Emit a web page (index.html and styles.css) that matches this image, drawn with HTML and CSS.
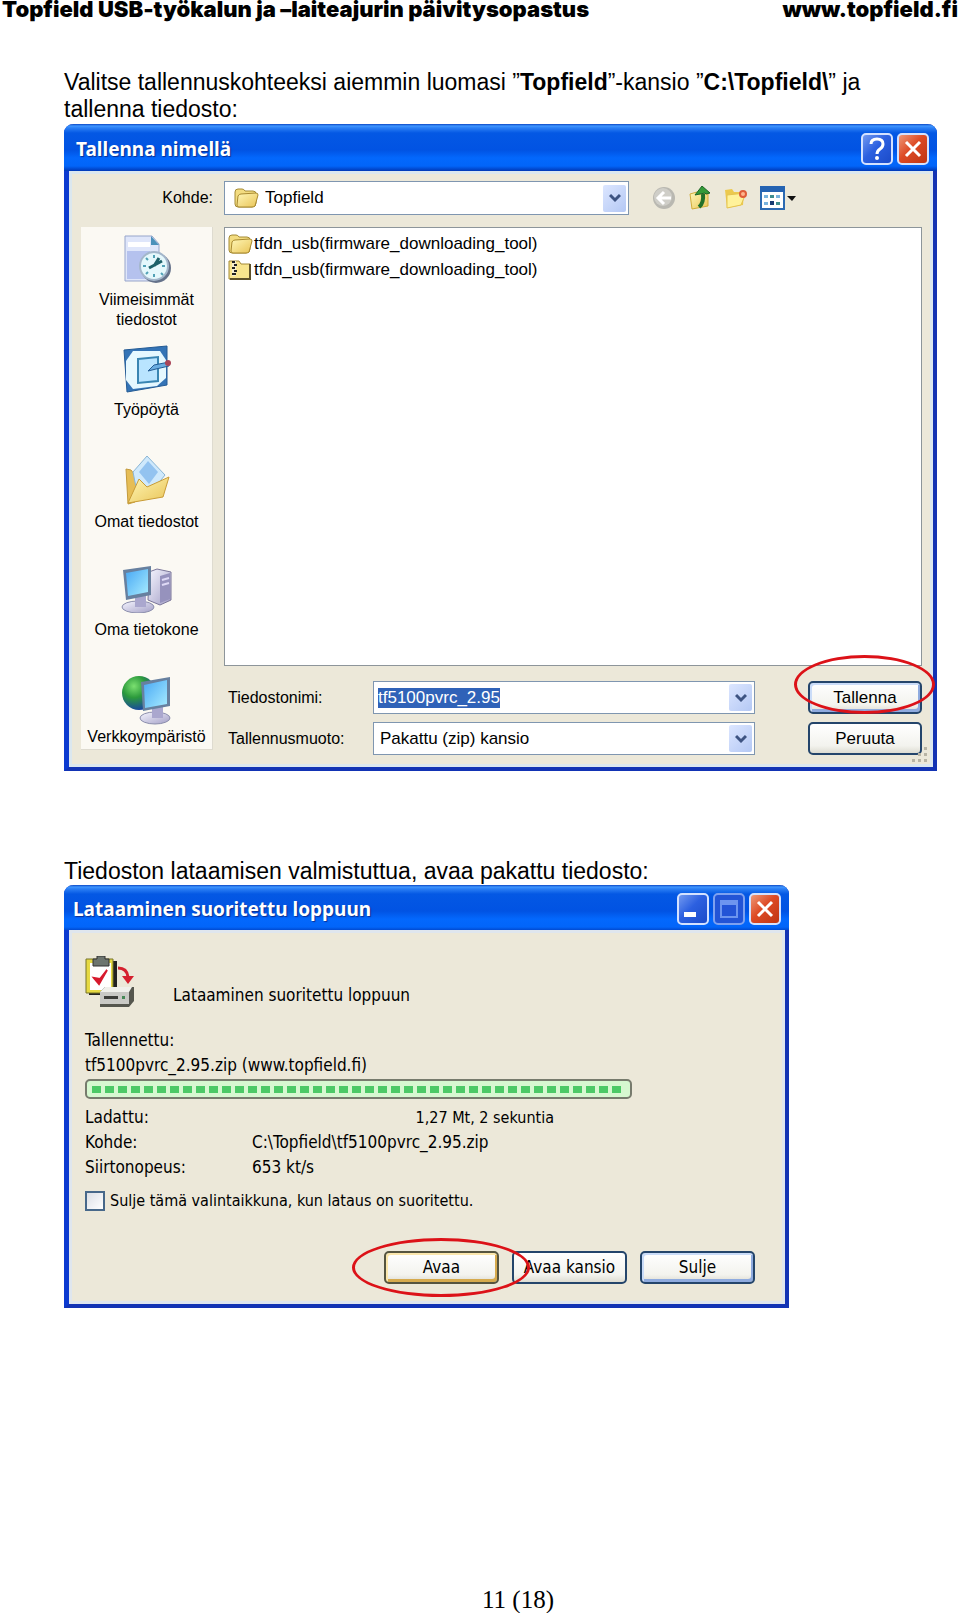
FILE: index.html
```html
<!DOCTYPE html>
<html lang="fi">
<head>
<meta charset="utf-8">
<meta name="viewport" content="width=device-width, initial-scale=1">
<title>Topfield USB-työkalun ja –laiteajurin päivitysopastus</title>
<link rel="stylesheet" href="styles.css">
</head>
<body>
<svg class="defs" aria-hidden="true">
  <defs>
    <linearGradient id="gold" x1="0" y1="0" x2="1" y2="1"><stop offset="0" stop-color="#fff7b8"/><stop offset="1" stop-color="#e9c456"/></linearGradient>
    <linearGradient id="screen" x1="0" y1="0" x2="1" y2="1"><stop offset="0" stop-color="#48a8f4"/><stop offset="1" stop-color="#a8ecff"/></linearGradient>
    <linearGradient id="metal" x1="0" y1="0" x2="1" y2="1"><stop offset="0" stop-color="#f6f6ff"/><stop offset="1" stop-color="#a39fc6"/></linearGradient>
    <radialGradient id="globe" cx=".35" cy=".3" r=".75"><stop offset="0" stop-color="#7be070"/><stop offset=".45" stop-color="#2c9a3c"/><stop offset="1" stop-color="#173fa8"/></radialGradient>
    <symbol id="folder" viewBox="0 0 26 22">
      <path d="M2 5q0-3 3-3h4q2 0 3 2h8q3 0 3 3v9q0 4-4 4H5q-3 0-3-3z" fill="#f3dc80" stroke="#a48a35"/>
      <path d="M5 9q1-2 3-2l15-1q2 0 2 2l-3 11q-1 1-3 1H6q-2 0-2-2z" fill="url(#gold)" stroke="#a98a30"/>
    </symbol>
    <symbol id="chevron" viewBox="0 0 12 10"><path d="M1 2l5 5 5-5" fill="none" stroke="#3e5482" stroke-width="3"/></symbol>
    <symbol id="cross" viewBox="0 0 20 20"><path d="M3 3l14 14M17 3L3 17" fill="none" stroke="#fff" stroke-width="3"/></symbol>
  </defs>
</svg>

<header class="page-header">
  <span>Topfield USB-työkalun ja –laiteajurin päivitysopastus</span>
  <span>www.topfield.fi</span>
</header>

<main class="content">
  <p class="instruction">Valitse tallennuskohteeksi aiemmin luomasi ”<b>Topfield</b>”-kansio ”<b>C:\Topfield\</b>” ja tallenna tiedosto:</p>

  <section class="window" aria-labelledby="save-title">
    <div class="titlebar">
      <h2 class="title" id="save-title">Tallenna nimellä</h2>
      <button class="caption-btn" type="button" aria-label="Ohje"><svg width="20" height="24" viewBox="0 0 20 24"><path d="M4 7q0-5 6-5t6 5q0 3-3 5t-3 5" fill="none" stroke="#fff" stroke-width="3"/><circle cx="10" cy="21" r="2" fill="#fff"/></svg></button>
      <button class="caption-btn close" type="button" aria-label="Sulje ikkuna"><svg width="20" height="20"><use href="#cross"/></svg></button>
    </div>
    <div class="save-body">
      <div class="toolbar">
        <label class="toolbar-label" for="folder">Kohde:</label>
        <div class="combo folder-combo">
          <svg width="26" height="22"><use href="#folder"/></svg>
          <select class="combo-field" id="folder"><option>Topfield</option></select>
          <span class="combo-arrow"><svg width="12" height="10"><use href="#chevron"/></svg></span>
        </div>
        <div class="tools">
          <button class="tool" type="button" aria-label="Takaisin"><svg width="24" height="24" viewBox="0 0 24 24"><circle cx="12" cy="12" r="11" fill="#b9b8b1"/><circle cx="11" cy="11" r="9" fill="#cfcec8"/><path d="M12 6l-6 6 6 6M7 12h12" fill="none" stroke="#fff" stroke-width="3"/></svg></button>
          <button class="tool" type="button" aria-label="Ylös"><svg width="24" height="24" viewBox="0 0 24 24"><path d="M2 8l7-2 2 2h9v12L4 23z" fill="url(#gold)" stroke="#d1ac39"/><path d="M11 21q5-4 4-13" fill="none" stroke="#21702a" stroke-width="4"/><path d="M7 9l7-9 8 7-4 1-1-1-5 1z" fill="#349b38" stroke="#1d6426"/></svg></button>
          <button class="tool" type="button" aria-label="Uusi kansio"><svg width="24" height="24" viewBox="0 0 24 24"><path d="M1 4l7-1 2 3h10l-1 13-16 3z" fill="#ecc94e"/><path d="M3 9l19-2-5 12-14 3z" fill="#fff29a" stroke="#e5c34e"/><circle cx="19" cy="8" r="3" fill="#ffb58c" stroke="#df5d38" stroke-width="2"/></svg></button>
          <button class="tool" type="button" aria-label="Näkymät"><svg width="36" height="24" viewBox="0 0 36 24"><path d="M1 1h23v22H1z" fill="#fff" stroke="#2c6ab2" stroke-width="2"/><path d="M0 0h25v6H0z" fill="#2563b2"/><path d="M4 9h4v3H4zM16 9h4v3h-4zM4 16h4v3H4z" fill="#79b3dd"/><path d="M10 9h4v3h-4zM16 16h4v3h-4z" fill="#3e8d8f"/><path d="M10 15h4v4h-4z" fill="#173b72"/><path d="M27 10h9l-4 5z" fill="#111"/></svg></button>
        </div>
      </div>
      <div class="browser">
        <nav class="places">
          <a class="place" href="#recent"><svg width="48" height="48" viewBox="0 0 48 48"><path d="M2 1h27l7 8v37H2z" fill="#dfe6fa" stroke="#97a5ca"/><path d="M4 16h23v28H4z" fill="#b5c2ee"/><path d="M5 7h22v5H5z" fill="#fff"/><path d="M28 1l8 9h-8z" fill="#4b91ba"/><circle cx="33" cy="33" r="15" fill="#65728a"/><circle cx="31" cy="31" r="14" fill="#e5f8fc" stroke="#a4b7cb" stroke-width="2"/><path d="M31 20v3M31 39v3M20 31h3M39 31h3M23 23l2 2M38 38l2 2M23 39l2-2" stroke="#51a1b6" stroke-width="2"/><path d="M26 33l13-7M31 31l5-8" stroke="#1d6169" stroke-width="3"/></svg><span>Viimeisimmät tiedostot</span></a>
          <a class="place" href="#desktop"><svg width="48" height="48" viewBox="0 0 48 48"><path d="M1 5l43-4v39L4 47z" fill="#3474b6" stroke="#245b94"/><path d="M10 6h27l6 9v18l-9 8-24 3-7-9V16z" fill="#e5f8ff"/><path d="M15 14l20-2v24l-20 2z" fill="#b9e4ff" stroke="#3985b2" stroke-width="2"/><path d="M46 17L31 20l-6 6 8-2 13-3z" fill="#6aace0" stroke="#245c95"/><circle cx="45" cy="18" r="3" fill="#a94558"/></svg><span>Työpöytä</span></a>
          <a class="place" href="#documents"><svg width="48" height="50" viewBox="0 0 48 50"><path d="M3 14l5 1 6 8-2 24-7 2z" fill="#e6bd55" stroke="#c39a3c"/><path d="M10 17L24 1l18 19-16 20-13-8z" fill="#cfe9fc" stroke="#8ab6d5"/><path d="M16 17l9-11 10 11-9 12z" fill="#93c3f0"/><path d="M5 48l11-24 8 8 22-10-6 20z" fill="url(#gold)" stroke="#c99c36"/></svg><span>Omat tiedostot</span></a>
          <a class="place" href="#computer"><svg width="52" height="48" viewBox="0 0 52 48"><path d="M28 7l8-3 14 3v28l-11 5-12-5z" fill="url(#metal)" stroke="#7a7699"/><path d="M39 11l10-3v26l-10 4z" fill="#9692bd"/><path d="M41 15l7-2M41 20l7-2" stroke="#ded9f5" stroke-width="2"/><ellipse cx="17" cy="42" rx="16" ry="6" fill="url(#metal)" stroke="#8b8eac"/><path d="M14 31h11v11H14z" fill="#aaa7ce"/><path d="M2 5l28-4v29L5 35z" fill="#67809f"/><path d="M5 8l22-4v23L7 31z" fill="url(#screen)"/></svg><span>Oma tietokone</span></a>
          <a class="place" href="#network"><svg width="52" height="50" viewBox="0 0 52 50"><circle cx="18" cy="18" r="17" fill="url(#globe)"/><ellipse cx="34" cy="43" rx="15" ry="6" fill="url(#metal)" stroke="#8b8eac"/><path d="M31 32h11v11H31z" fill="#aaa7ce"/><path d="M20 7l29-5v29l-27 5z" fill="#67809f"/><path d="M23 10l23-5v24l-22 4z" fill="url(#screen)"/></svg><span>Verkkoympäristö</span></a>
        </nav>
        <div class="files">
          <ul class="file-list">
            <li class="file"><svg width="26" height="22"><use href="#folder"/></svg>tfdn_usb(firmware_downloading_tool)</li>
            <li class="file"><svg width="26" height="22" viewBox="0 0 26 22"><path d="M2 2h10l2 3h9v15H2z" fill="#f8e58e" stroke="#a48a35"/><path d="M23 5v15H3" fill="none" stroke="#5d512b" stroke-width="2"/><path d="M5 2h4v15H5z" fill="#f4eed0"/><path d="M5 3h3M7 6h3M5 9h3M7 12h3M5 15h4" stroke="#222" stroke-width="2"/></svg>tfdn_usb(firmware_downloading_tool)</li>
          </ul>
          <form class="save-form">
            <label class="form-label" for="filename">Tiedostonimi:</label>
            <div class="combo form-combo">
              <input class="filename" id="filename" type="text" value="tf5100pvrc_2.95">
              <span class="combo-arrow"><svg width="12" height="10"><use href="#chevron"/></svg></span>
            </div>
            <div class="marked">
              <button class="btn default" type="button">Tallenna</button>
              <span class="ring ring-save"></span>
            </div>
            <label class="form-label" for="filetype">Tallennusmuoto:</label>
            <div class="combo form-combo">
              <select class="combo-field" id="filetype"><option>Pakattu (zip) kansio</option></select>
              <span class="combo-arrow"><svg width="12" height="10"><use href="#chevron"/></svg></span>
            </div>
            <button class="btn" type="button">Peruuta</button>
          </form>
        </div>
      </div>
      <svg class="grip" width="18" height="18" viewBox="0 0 18 18" aria-hidden="true"><path d="M13 1h3v3h-3zM7 7h3v3H7zM13 7h3v3h-3zM1 13h3v3H1zM7 13h3v3H7zM13 13h3v3h-3z" fill="#b8b4a4"/></svg>
    </div>
  </section>

  <p class="instruction second">Tiedoston lataamisen valmistuttua, avaa pakattu tiedosto:</p>

  <section class="window download" aria-labelledby="download-title">
    <div class="titlebar">
      <h2 class="title" id="download-title">Lataaminen suoritettu loppuun</h2>
      <button class="caption-btn" type="button" aria-label="Pienennä"><svg width="20" height="20"><path d="M1 13h12v5H1z" fill="#fff"/></svg></button>
      <button class="caption-btn disabled" type="button" aria-label="Suurenna" disabled><svg width="20" height="20"><path d="M2 2h16v16H2z" fill="none" stroke="#6d95ef" stroke-width="2"/><path d="M1 1h18v5H1z" fill="#6d95ef"/></svg></button>
      <button class="caption-btn close" type="button" aria-label="Sulje ikkuna"><svg width="20" height="20"><use href="#cross"/></svg></button>
    </div>
    <div class="download-body">
      <div class="status">
        <svg width="50" height="52" viewBox="0 0 50 52"><path d="M4 5h28v34H4z" fill="#222"/><path d="M1 3h27v34H1z" fill="#e6d943" stroke="#77742b"/><path d="M5 7h21v27H5z" fill="#fff"/><path d="M8 3h4V0h8v3h4v7H8z" fill="#6d756f" stroke="#333"/><path d="M9 22l5 6 8-14-7 9z" fill="#d7192d" stroke="#d7192d" stroke-width="2"/><path d="M33 12q9 0 10 9" fill="none" stroke="#d5202e" stroke-width="3"/><path d="M37 20h12l-6 8z" fill="#d5202e"/><path d="M15 36l5-5h29v14l-5 6H15z" fill="#55564e"/><path d="M15 36h29v12H15z" fill="#c9c9c5"/><path d="M15 36l5-5h27l-3 5z" fill="#f0f0eb"/><path d="M19 40h14v3H19z" fill="#3c3d39"/><path d="M37 40h3v3h-3z" fill="#458856"/></svg>
        <p>Lataaminen suoritettu loppuun</p>
      </div>
      <p>Tallennettu:</p>
      <p>tf5100pvrc_2.95.zip (www.topfield.fi)</p>
      <div class="progress" role="progressbar" aria-label="Lataus" aria-valuenow="100"><div class="progress-fill"></div></div>
      <dl class="details">
        <dt>Ladattu:</dt><dd class="amount">1,27 Mt, 2 sekuntia</dd>
        <dt>Kohde:</dt><dd>C:\Topfield\tf5100pvrc_2.95.zip</dd>
        <dt>Siirtonopeus:</dt><dd>653 kt/s</dd>
      </dl>
      <label class="check"><input class="box" type="checkbox">Sulje tämä valintaikkuna, kun lataus on suoritettu.</label>
      <div class="actions">
        <div class="marked">
          <button class="btn hot" type="button">Avaa</button>
          <span class="ring ring-open"></span>
        </div>
        <button class="btn" type="button">Avaa kansio</button>
        <button class="btn default" type="button">Sulje</button>
      </div>
    </div>
  </section>
</main>

<footer class="page-footer">11 (18)</footer>
</body>
</html>
```

FILE: styles.css
```css
* { box-sizing: border-box; }

body {
  margin: 0;
  min-height: 100vh;
  display: flex;
  flex-direction: column;
  background: #fff;
  color: #000;
  font-family: "Liberation Sans", Arial, sans-serif;
}

p, h2, ul, dl, dd { margin: 0; padding: 0; }
svg { display: block; flex: none; }
button, input, select { font: inherit; color: inherit; margin: 0; }
.defs { position: absolute; width: 0; height: 0; }

.page-header {
  display: flex;
  justify-content: space-between;
  padding: 0 2px;
  font-family: Inter, "Liberation Sans", sans-serif;
  font-size: 22px;
  line-height: 18px;
  font-weight: 900;
}

.content { padding: 51px 23px 0 64px; }
.instruction { font-size: 23px; line-height: 27px; }
.instruction.second { margin-top: 87px; }

/* Windows */
.window {
  background: #ece8d9;
  border: 5px solid #0c3ad0;
  border-top: 0;
  border-right: 4px solid #1233b4;
  border-bottom: 4px solid #1233b4;
  border-radius: 9px 9px 0 0;
  margin-top: 1px;
}
.download { max-width: 725px; margin-top: 0; }

.titlebar {
  display: flex;
  align-items: center;
  gap: 4px;
  height: 47px;
  margin: 0 -4px 0 -5px;
  padding: 3px 8px 0 12px;
  border-radius: 9px 9px 0 0;
  background: linear-gradient(#0b47c4 0, #3f96ff 2px, #2a7ef4 4px, #0458e4 9px, #0153e3 26px, #0368fd 34px, #0265f9 42px, #0138b6 47px);
}
.download .titlebar { height: 45px; padding-left: 9px; padding-top: 2px; }
.title {
  flex: 1;
  font-family: "Noto Sans", sans-serif;
  font-size: 19px;
  line-height: 28px;
  font-weight: 700;
  color: #fff;
  text-shadow: 1px 1px 1px #0a2f94;
}
.caption-btn {
  display: grid;
  place-items: center;
  width: 32px;
  height: 32px;
  padding: 0;
  border: 2px solid #d4e2ff;
  border-radius: 5px;
  background: linear-gradient(135deg, #7299f0, #2c60e0 45%, #1b4bc9);
}
.caption-btn.close { background: linear-gradient(135deg, #ee9877, #dd4a25 45%, #bf3513); }
.caption-btn.disabled { border-color: #7ea1f0; background: #2354d6; }

/* Save dialog */
.save-body {
  position: relative;
  padding: 10px 11px 12px 12px;
  font-size: 17px;
  line-height: 20px;
  box-shadow: inset 0 0 0 3px #dbe7ef;
}
.toolbar { display: flex; align-items: center; gap: 11px; margin-bottom: 12px; }
.toolbar-label { width: 132px; font-size: 16px; text-align: right; }
.combo {
  display: flex;
  align-items: center;
  gap: 6px;
  height: 33px;
  padding: 2px 2px 2px 4px;
  border: 1px solid #7f96b0;
  background: #fff;
}
.folder-combo { flex: 0 1 405px; height: 34px; padding-left: 8px; }
.combo-field {
  flex: 1;
  min-width: 0;
  height: 100%;
  padding: 0;
  border: 0;
  background: none;
  appearance: none;
}
.combo-arrow {
  display: grid;
  place-items: center;
  width: 23px;
  height: 27px;
  margin-left: auto;
  border-radius: 2px;
  background: linear-gradient(135deg, #dce6ff, #b4c8f4);
  pointer-events: none;
}
.tools { display: flex; gap: 12px; margin-left: 12px; }
.tool { padding: 0; border: 0; background: none; }

.browser { display: flex; gap: 11px; }
.places {
  width: 132px;
  flex: none;
  margin-bottom: 5px;
  padding: 8px 0 2px;
  background: #fbf9f3;
  border-right: 1px solid #dedbd0;
  border-bottom: 1px solid #dedbd0;
  font-size: 16px;
}
.place {
  display: flex;
  flex-direction: column;
  align-items: center;
  gap: 7px;
  height: 110px;
  padding: 0 8px;
  color: #000;
  text-align: center;
  text-decoration: none;
}
.place:last-child { height: auto; gap: 2px; padding: 0; }
.files { flex: 1; min-width: 0; display: flex; flex-direction: column; gap: 15px; }
.file-list {
  flex: 1;
  list-style: none;
  padding: 3px 2px;
  border: 1px solid #8d959a;
  background: #fff;
}
.file { display: flex; align-items: center; gap: 1px; height: 26px; }
.save-form {
  display: grid;
  grid-template-columns: 149px 1fr 114px;
  row-gap: 8px;
  align-items: center;
}
.form-label { padding-left: 4px; font-size: 16px; }
.form-combo { margin-right: 53px; }
.form-combo .combo-field { padding-left: 2px; }
.filename {
  field-sizing: content;
  height: 20px;
  padding: 0;
  border: 0;
  background: #2f62b8;
  color: #fff;
}
.grip { position: absolute; right: 4px; bottom: 3px; }

/* Buttons */
.btn {
  display: block;
  width: 100%;
  height: 33px;
  padding: 0;
  border: 2px solid #24456b;
  border-radius: 5px;
  background: linear-gradient(#fff, #f3f3ee 75%, #dddcd2);
  white-space: nowrap;
}
.btn.default { box-shadow: inset 2px 2px #cadcf8, inset -2px -3px #8fabdf; }
.btn.hot { border-color: #55543f; box-shadow: inset 2px 2px #fbe7ad, inset -2px -3px #d6aa4d; }
.marked { position: relative; z-index: 1; }
.ring {
  position: absolute;
  height: 59px;
  border: 3px solid #dc1218;
  border-radius: 50%;
  pointer-events: none;
}
.ring-save { left: -14px; right: -13px; top: -26px; }
.ring-open { left: -32px; right: -31px; top: -13px; }

/* Download dialog */
.download-body {
  padding: 26px 30px 20px 16px;
  font-family: "DejaVu Sans Condensed", "DejaVu Sans", sans-serif;
  font-size: 17px;
  line-height: 25px;
  box-shadow: inset 0 0 0 3px #dfe6ee;
}
.status { display: flex; align-items: flex-end; gap: 38px; margin-bottom: 20px; }
.progress {
  max-width: 547px;
  height: 20px;
  margin: 1px 0 6px;
  padding: 5px 5px;
  border: 2px solid #777b6d;
  border-radius: 5px;
  background: #d6f8d0;
}
.progress-fill {
  height: 7px;
  background: linear-gradient(90deg, #4cc966 9px, transparent 9px) 0 0 / 13px 7px round;
}
.details {
  display: grid;
  grid-template-columns: 167px 302px;
}
.amount { font-size: 16px; text-align: right; }
.check { display: flex; align-items: center; gap: 5px; margin-top: 8px; font-size: 16px; }
.box {
  appearance: none;
  width: 20px;
  height: 20px;
  margin: 0;
  border: 2px solid #47688a;
  background: linear-gradient(135deg, #dcdfe6, #fff);
}
.actions {
  display: grid;
  grid-template-columns: repeat(3, 115px);
  justify-content: end;
  gap: 13px;
  margin-top: 38px;
}

.page-footer {
  margin-top: auto;
  padding: 40px 0 0 76px;
  text-align: center;
  font-family: "Liberation Serif", "Times New Roman", serif;
  font-size: 25px;
  line-height: 27px;
}
```
